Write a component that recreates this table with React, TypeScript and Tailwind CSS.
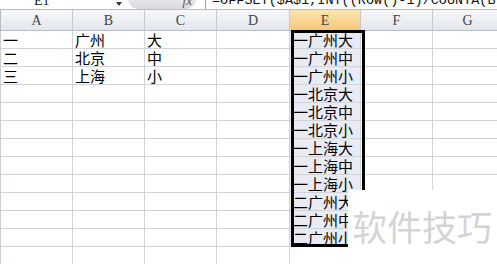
const colWidths = [72, 72, 72, 73, 71, 72, 70];
const colNames = ['A', 'B', 'C', 'D', 'E', 'F', 'G'];

const sourceRows = [
  ['一', '广州', '大'],
  ['二', '北京', '中'],
  ['三', '上海', '小'],
];

const combined = [
  '一广州大', '一广州中', '一广州小',
  '一北京大', '一北京中', '一北京小',
  '一上海大', '一上海中', '一上海小',
  '二广州大', '二广州中', '二广州小',
];

const cjk = { fontFamily: '"Noto Sans CJK SC", "Noto Sans", sans-serif' };

export default function App() {
  const rows = Array.from({ length: 13 }, (_, r) => {
    const src = sourceRows[r];
    return [src?.[0] ?? '', src?.[1] ?? '', src?.[2] ?? '', '', combined[r] ?? '', '', ''];
  });

  return (
    <div className="relative w-[497px] h-[264px] overflow-hidden bg-white">
      {/* formula bar, mostly scrolled off */}
      <div className="flex h-[10px] items-end overflow-hidden border-b border-[#b8bcc4] bg-white">
        <div className="flex w-[128px] items-end justify-between pl-[34px] pr-[6px]">
          <span className="text-[14px] leading-[16px] text-[#222]" style={{ fontFamily: '"Liberation Serif", serif' }}>E1</span>
          <span className="mb-[3px] h-0 w-0 border-x-[3px] border-t-[4px] border-x-transparent border-t-[#333]" />
        </div>
        <div className="flex h-[18px] w-[68px] items-end justify-end rounded-b-[10px] bg-gradient-to-b from-[#f4f5f7] to-[#d6d9de] pr-[4px]">
          <span className="text-[13px] italic leading-[16px] text-[#555]" style={{ fontFamily: '"Liberation Serif", serif' }}>fx</span>
        </div>
        <div className="ml-[9px] h-full w-px bg-[#9aa0a8]" />
        <span
          className="ml-[6px] whitespace-nowrap text-[13.5px] leading-[16px] text-[#111]"
          style={{ fontFamily: '"Liberation Mono", monospace' }}
        >
          =OFFSET($A$1,INT((ROW()-1)/COUNTA(B
        </span>
      </div>

      {/* column headers */}
      <div className="flex h-[21px] border-b border-[#b6bcc6]">
        <div className="w-[4px] border-r border-[#b6bcc6] bg-[#e4e7ec]" />
        {colNames.map((name, i) => (
          <div
            key={name}
            className={
              'flex shrink-0 items-center justify-center border-r border-[#c4c9d2] text-[14px] text-[#444] ' +
              (name === 'E'
                ? 'bg-gradient-to-b from-[#fbe6b2] to-[#f6c777]'
                : 'bg-gradient-to-b from-[#f7f8fa] to-[#e3e6eb]')
            }
            style={{ width: colWidths[i], fontFamily: '"Liberation Serif", serif' }}
          >
            {name}
          </div>
        ))}
      </div>

      {/* cells */}
      {rows.map((cells, r) => (
        <div key={r} className="flex h-[18px]">
          <div className={'w-[4px] border-r border-b border-[#c9cdd4] ' + (r < 12 ? 'bg-[#f6c36e]' : 'bg-[#e4e7ec]')} />
          {cells.map((text, c) => (
            <div
              key={c}
              className={
                'flex shrink-0 items-center overflow-hidden whitespace-nowrap border-r border-b border-[#d0d3d8] text-[15px] leading-none text-black ' +
                (c === 4 && r < 12 ? 'bg-[#e8ebf4] pl-[3px]' : 'bg-white pl-[2px]')
              }
              style={{ width: colWidths[c], ...cjk }}
            >
              {text}
            </div>
          ))}
        </div>
      ))}

      {/* selection outline */}
      <div className="pointer-events-none absolute left-[291px] top-[30px] h-[217px] w-[74px] border-[3px] border-black" />

      {/* watermark */}
      <div className="absolute left-[348px] top-[190px] right-0 bottom-0 bg-white">
        <span
          className="absolute left-[4px] top-[18px] whitespace-nowrap text-[35px] leading-none text-[#d4d4d4]"
          style={cjk}
        >
          软件技巧
        </span>
      </div>
    </div>
  );
}
